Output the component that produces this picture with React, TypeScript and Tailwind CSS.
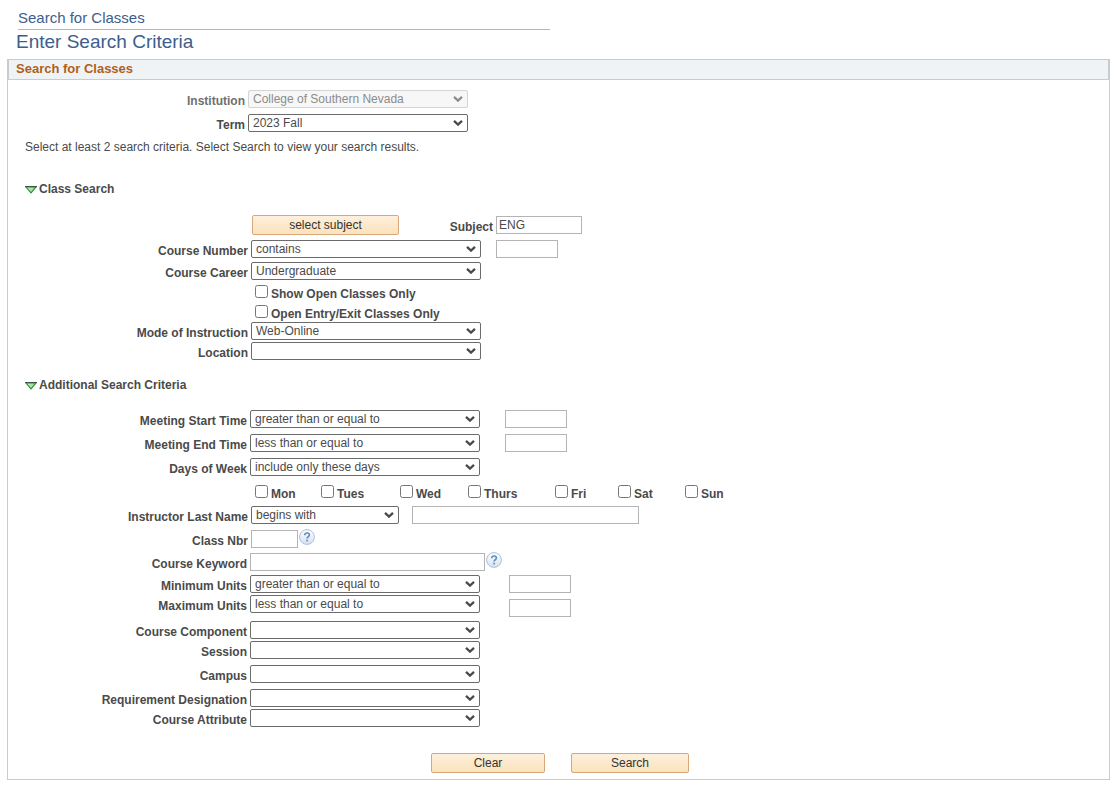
import type { ReactNode } from 'react';

const days = ['Mon', 'Tues', 'Wed', 'Thurs', 'Fri', 'Sat', 'Sun'];

type RowProps = {
  id: string;
  label: string;
  labelClass?: string;
  className?: string;
  children: ReactNode;
};

function Row({ id, label, labelClass = 'w-[239px]', className = '', children }: RowProps) {
  return (
    <div className={`flex items-start gap-[3px] ${className}`}>
      <label htmlFor={id} className={`shrink-0 pt-1 text-right font-bold leading-[14px] ${labelClass}`}>
        {label}
      </label>
      {children}
    </div>
  );
}

type SelectProps = {
  id: string;
  value?: string;
  width?: string;
  disabled?: boolean;
};

function Select({ id, value = '', width = 'w-[230px]', disabled }: SelectProps) {
  return (
    <div className={`relative shrink-0 ${width}`}>
      <select
        id={id}
        disabled={disabled}
        defaultValue={value}
        className="peer block h-[18px] w-full appearance-none rounded-xs border border-[#6b6b6b] bg-white pl-1 leading-[14px] text-[#4a4a4a] disabled:border-[#d4d4d4] disabled:bg-[#f7f7f7] disabled:text-[#8c8c8c] disabled:opacity-100"
      >
        <option value={value}>{value}</option>
      </select>
      <svg
        viewBox="0 0 10 6"
        className="pointer-events-none absolute top-1.5 right-[5px] h-1.5 w-2.5 text-[#4a4a4a] peer-disabled:text-[#8c8c8c]"
      >
        <path d="M1 .9L5 4.600l4-3.700" fill="none" stroke="currentColor" strokeWidth="2.300" />
      </svg>
    </div>
  );
}

function TextBox({ id, label, value, className }: { id: string; label?: string; value?: string; className: string }) {
  return (
    <input
      id={id}
      type="text"
      aria-label={label}
      defaultValue={value}
      className={`h-[18px] border border-[#b4b4b4] bg-white px-0.5 ${className}`}
    />
  );
}

function CheckBox({ id, label }: { id: string; label: string }) {
  return (
    <div className="flex h-5 items-start gap-[3px]">
      <input id={id} type="checkbox" className="size-[13px]" />
      <label htmlFor={id} className="pt-0.5 font-bold leading-[14px]">
        {label}
      </label>
    </div>
  );
}

function Button({ children, className }: { children: ReactNode; className: string }) {
  return (
    <button
      type="button"
      className={`h-5 rounded-xs border border-[#d9a679] bg-gradient-to-b from-[#fdf0dc] to-[#fbe2bb] leading-4 text-[#333333] ${className}`}
    >
      {children}
    </button>
  );
}

function HelpButton() {
  return (
    <button type="button" aria-label="Help" className="-mt-px -ml-0.5 size-4">
      <svg viewBox="0 0 16 16" className="size-4">
        <defs>
          <linearGradient id="help" x1="0" y1="0" x2="0" y2="1">
            <stop offset="0" stopColor="#ffffff" />
            <stop offset="1" stopColor="#d6e0ee" />
          </linearGradient>
        </defs>
        <circle cx="8" cy="8" r="7.4" fill="url(#help)" stroke="#a9c0de" />
        <path d="M5.7 6.2C5.8 4.7 6.8 4 8.1 4c1.300 0 2.300.8 2.300 2 0 1.700-2.300 1.800-2.300 3.500" fill="none" stroke="#5b8fc7" strokeWidth="1.600" />
        <rect x="7.200" y="10.700" width="1.700" height="1.700" fill="#5b8fc7" />
      </svg>
    </button>
  );
}

function SectionTitle({ children }: { children: ReactNode }) {
  return (
    <h3 className="font-bold leading-4">
      <button type="button" className="ml-[17px] flex items-center gap-0.5">
        <svg viewBox="0 0 12 8" className="mt-0.5 h-2 w-3">
          <defs>
            <linearGradient id="arrow" x1="0" y1="0" x2="1" y2="0">
              <stop offset="0" stopColor="#d5f5cc" />
              <stop offset="1" stopColor="#6fdd74" />
            </linearGradient>
          </defs>
          <path d="M1 1h10L6 6.800z" fill="url(#arrow)" stroke="#2f8a3a" strokeWidth="1.100" />
          <path d="M0 .5h12" stroke="#3c5540" />
        </svg>
        {children}
      </button>
    </h3>
  );
}

export default function App() {
  return (
    <main className="bg-white px-[7px] pt-2 pb-3 font-['Liberation_Sans',Arial,sans-serif] text-[12px] text-[#4a4a4a]">
      <header className="text-[#3d5e8c]">
        <div className="ml-[11px] max-w-[532px] border-b border-[#b5b5b5] pb-px text-[15px] leading-5">
          Search for Classes
        </div>
        <h1 className="ml-[9px] text-[19px] leading-6">Enter Search Criteria</h1>
      </header>

      <form className="mt-[5px] mr-[-1px] border border-[#c8cbd0] pb-1.5">
        <h2 className="border-x border-b border-[#c8cbd0] bg-[#eff3f5] px-[7px] pt-px pb-0.5 text-[13px] font-bold leading-4 text-[#b0601c]">
          Search for Classes
        </h2>

        <Row id="institution" label="Institution" labelClass="w-[237px] text-[#6f6f6f]" className="mt-2.5">
          <Select id="institution" value="College of Southern Nevada" width="w-[220px]" disabled />
        </Row>
        <Row id="term" label="Term" labelClass="w-[237px]" className="mt-1.5">
          <Select id="term" value="2023 Fall" width="w-[220px]" />
        </Row>
        <p className="mt-[7px] mb-[26px] ml-[17px] leading-4">
          Select at least 2 search criteria. Select Search to view your search results.
        </p>

        {/* Class Search */}
        <SectionTitle>Class Search</SectionTitle>
        <div className="mt-[18px] ml-[244px] flex items-start">
          <Button className="w-[147px]">select subject</Button>
          <Row id="subject" label="Subject" labelClass="w-[94px]" className="mt-px">
            <TextBox id="subject" value="ENG" className="w-[86px]" />
          </Row>
        </div>
        <Row id="number" label="Course Number" labelClass="w-[240px]" className="mt-[5px]">
          <Select id="number" value="contains" />
          <TextBox id="numberValue" label="Course Number value" className="ml-3 w-[62px]" />
        </Row>
        <Row id="career" label="Course Career" labelClass="w-[240px]" className="mt-1">
          <Select id="career" value="Undergraduate" />
        </Row>
        <div className="mt-[5px] ml-[247px]">
          <CheckBox id="openOnly" label="Show Open Classes Only" />
          <CheckBox id="openEntry" label="Open Entry/Exit Classes Only" />
        </div>
        <Row id="mode" label="Mode of Instruction" labelClass="w-[240px]" className="-mt-[3px]">
          <Select id="mode" value="Web-Online" />
        </Row>
        <Row id="location" label="Location" labelClass="w-[240px]" className="mt-0.5 mb-[17px]">
          <Select id="location" />
        </Row>

        {/* Additional Search Criteria */}
        <SectionTitle>Additional Search Criteria</SectionTitle>
        <Row id="start" label="Meeting Start Time" className="mt-[17px]">
          <Select id="start" value="greater than or equal to" />
          <TextBox id="startValue" label="Start time" className="ml-[22px] w-[62px]" />
        </Row>
        <Row id="end" label="Meeting End Time" className="mt-1.5">
          <Select id="end" value="less than or equal to" />
          <TextBox id="endValue" label="End time" className="ml-[22px] w-[62px]" />
        </Row>
        <Row id="days" label="Days of Week" className="mt-1.5">
          <Select id="days" value="include only these days" />
        </Row>
        <div className="mt-[9px] ml-[247px] grid grid-cols-[66px_79px_68px_87px_63px_67px_60px]">
          {days.map((day) => (
            <CheckBox key={day} id={day} label={day} />
          ))}
        </div>
        <Row id="instructor" label="Instructor Last Name" labelClass="w-[240px]" className="mt-px">
          <Select id="instructor" value="begins with" width="w-[148px]" />
          <TextBox id="instructorValue" label="Instructor name" className="ml-2.5 w-[227px]" />
        </Row>
        <Row id="classNbr" label="Class Nbr" labelClass="w-[240px]" className="mt-1.5">
          <TextBox id="classNbr" className="w-[47px]" />
          <HelpButton />
        </Row>
        <Row id="keyword" label="Course Keyword" className="mt-[5px]">
          <TextBox id="keyword" className="w-[235px]" />
          <HelpButton />
        </Row>
        <Row id="min" label="Minimum Units" className="mt-1">
          <Select id="min" value="greater than or equal to" />
          <TextBox id="minValue" label="Minimum" className="ml-[26px] w-[62px]" />
        </Row>
        <Row id="max" label="Maximum Units" className="mt-0.5">
          <Select id="max" value="less than or equal to" />
          <TextBox id="maxValue" label="Maximum" className="mt-1 ml-[26px] w-[62px]" />
        </Row>
        <Row id="component" label="Course Component" className="mt-1">
          <Select id="component" />
        </Row>
        <Row id="session" label="Session" className="mt-0.5">
          <Select id="session" />
        </Row>
        <Row id="campus" label="Campus" className="mt-1.5">
          <Select id="campus" />
        </Row>
        <Row id="requirement" label="Requirement Designation" className="mt-1.5">
          <Select id="requirement" />
        </Row>
        <Row id="attribute" label="Course Attribute" className="mt-0.5">
          <Select id="attribute" />
        </Row>

        <div className="mt-[26px] ml-[423px] flex gap-[26px]">
          <Button className="w-[114px]">Clear</Button>
          <Button className="w-[118px]">Search</Button>
        </div>
      </form>
    </main>
  );
}
